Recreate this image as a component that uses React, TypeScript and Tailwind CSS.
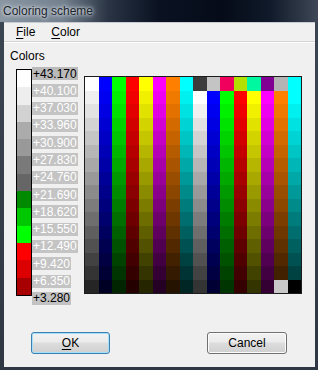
import React from "react";

const base: [number, number, number][] = [
  [255, 255, 255],
  [0, 0, 255],
  [0, 255, 0],
  [255, 0, 0],
  [255, 255, 0],
  [255, 0, 255],
  [255, 128, 0],
  [0, 255, 255],
];
const topSpecial = ["#3c3c3c", "#c4c4c4", "#f0005c", "#b4e000", "#00f8a0", "#800094", "#b4b4b4", "#00ffff"];

function shade(c: [number, number, number], r: number) {
  const f = 1 - r * 0.057;
  return `rgb(${Math.round(c[0] * f)},${Math.round(c[1] * f)},${Math.round(c[2] * f)})`;
}

function cellColor(row: number, col: number) {
  if (col < 8) return shade(base[col], row);
  const k = col - 8;
  if (row === 0) return topSpecial[k];
  if (row === 15 && col === 14) return "#c8c8c8";
  if (row === 15 && col === 15) return "#000000";
  return shade(base[k], row - 1);
}

const barColors = [
  "#ffffff",
  "#eeeeee",
  "#d2d2d2",
  "#ababab",
  "#999999",
  "#7a7a7a",
  "#666666",
  "#008a00",
  "#00c800",
  "#00ff00",
  "#ff0000",
  "#dc0000",
  "#a80000",
];

const labels = [
  "+43.170",
  "+40.100",
  "+37.030",
  "+33.960",
  "+30.900",
  "+27.830",
  "+24.760",
  "+21.690",
  "+18.620",
  "+15.550",
  "+12.490",
  "+9.420",
  "+6.350",
  "+3.280",
];

export default function App() {
  const rows = Array.from({ length: 16 }, (_, i) => i);
  return (
    <div
      className="w-[318px] h-[370px] flex flex-col overflow-hidden bg-[linear-gradient(180deg,#3c4652_0%,#2e3742_100%)]"
      style={{ fontFamily: '"Liberation Sans", Arial, sans-serif' }}
    >
      <div className="h-[22px] shrink-0 flex items-center pl-[3px] bg-[linear-gradient(90deg,#8a96a2_0%,#73808e_20%,#2a3444_34%,#0a1222_50%,#050b18_70%,#101a2a_85%,#3e4856_100%)]">
        <span className="text-[12px] leading-none text-[#1c232b] [text-shadow:0_0_6px_#e8eef4,0_0_3px_#e8eef4]">
          Coloring scheme
        </span>
      </div>
      <div className="flex-1 ml-[4px] mr-[3px] mb-[3px] bg-[#f0f0f0] flex flex-col border-t border-[#c8ccd2]">
        <div className="h-[19px] shrink-0 flex items-center text-[12px] text-black border-b border-[#d4d4d4] pl-[12px] gap-[16px] shadow-[0_1px_0_#ffffff]">
          <span>
            <span className="underline underline-offset-2">F</span>ile
          </span>
          <span>
            <span className="underline underline-offset-2">C</span>olor
          </span>
        </div>
        <div className="pl-[6px] pt-[7px] text-[12px] leading-[14px] text-black">Colors</div>
        <div className="flex items-start pl-[12px] mt-[4px]">
          <div className="flex items-start">
            <div className="mt-[2px] w-[16px] border border-black flex flex-col">
              {barColors.map((c, i) => (
                <div key={i} className="h-[17.3px]" style={{ backgroundColor: c }} />
              ))}
            </div>
            <div className="flex flex-col w-[46px]">
              {labels.map((l, i) => (
                <div key={i} className="h-[17.3px] flex items-start">
                  <span
                    className={
                      "h-[13px] flex items-center text-[12px] leading-none px-[1px] " +
                      (i === 0
                        ? "bg-[#bababa] text-black"
                        : i === labels.length - 1
                        ? "bg-[#c2c2c2] text-black"
                        : "bg-[#c4c4c4] text-white")
                    }
                  >
                    {l}
                  </span>
                </div>
              ))}
            </div>
          </div>
          <div className="ml-[6px] mt-[9px] w-[218px] h-[218px] border border-[#1c1c1c] grid grid-cols-16 grid-rows-16">
            {rows.map((r) =>
              rows.map((c) => (
                <div key={`${r}-${c}`} style={{ backgroundColor: cellColor(r, c) }} />
              ))
            )}
          </div>
        </div>
        <div className="flex justify-between pl-[27px] pr-[28px] mt-[23px]">
          <button className="w-[79px] h-[22px] rounded-[3px] border border-[#3c7fb1] bg-[linear-gradient(180deg,#f2f2f2_0%,#ebebeb_45%,#dddddd_50%,#cfcfcf_100%)] shadow-[inset_0_0_0_1px_#a6dff8] text-[12px] text-black flex items-center justify-center">
            <span>
              <span className="underline underline-offset-2">O</span>K
            </span>
          </button>
          <button className="w-[80px] h-[22px] rounded-[3px] border border-[#707070] bg-[linear-gradient(180deg,#f2f2f2_0%,#ebebeb_45%,#dddddd_50%,#cfcfcf_100%)] shadow-[inset_0_0_0_1px_#fcfcfc] text-[12px] text-black flex items-center justify-center">
            Cancel
          </button>
        </div>
      </div>
    </div>
  );
}
